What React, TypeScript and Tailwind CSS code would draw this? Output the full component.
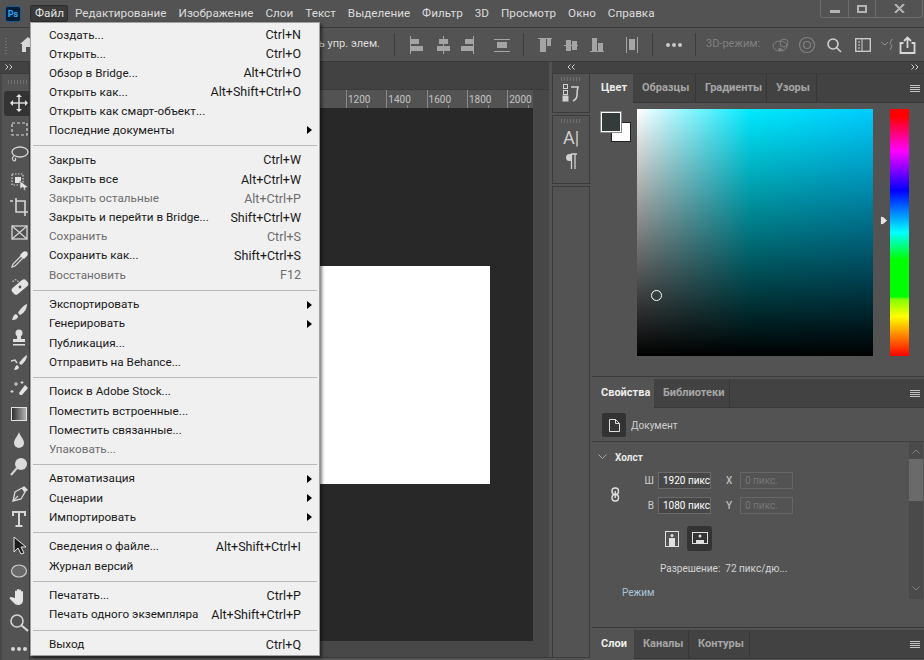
import React from 'react'

type Item = { label: string; keys?: string; off?: boolean; sub?: boolean } | 'sep'

const MENU_ITEMS: Item[] = [
  { label: 'Создать...', keys: 'Ctrl+N' },
  { label: 'Открыть...', keys: 'Ctrl+O' },
  { label: 'Обзор в Bridge...', keys: 'Alt+Ctrl+O' },
  { label: 'Открыть как...', keys: 'Alt+Shift+Ctrl+O' },
  { label: 'Открыть как смарт-объект...' },
  { label: 'Последние документы', sub: true },
  'sep',
  { label: 'Закрыть', keys: 'Ctrl+W' },
  { label: 'Закрыть все', keys: 'Alt+Ctrl+W' },
  { label: 'Закрыть остальные', keys: 'Alt+Ctrl+P', off: true },
  { label: 'Закрыть и перейти в Bridge...', keys: 'Shift+Ctrl+W' },
  { label: 'Сохранить', keys: 'Ctrl+S', off: true },
  { label: 'Сохранить как...', keys: 'Shift+Ctrl+S' },
  { label: 'Восстановить', keys: 'F12', off: true },
  'sep',
  { label: 'Экспортировать', sub: true },
  { label: 'Генерировать', sub: true },
  { label: 'Публикация...' },
  { label: 'Отправить на Behance...' },
  'sep',
  { label: 'Поиск в Adobe Stock...' },
  { label: 'Поместить встроенные...' },
  { label: 'Поместить связанные...' },
  { label: 'Упаковать...', off: true },
  'sep',
  { label: 'Автоматизация', sub: true },
  { label: 'Сценарии', sub: true },
  { label: 'Импортировать', sub: true },
  'sep',
  { label: 'Сведения о файле...', keys: 'Alt+Shift+Ctrl+I' },
  { label: 'Журнал версий' },
  'sep',
  { label: 'Печатать...', keys: 'Ctrl+P' },
  { label: 'Печать одного экземпляра', keys: 'Alt+Shift+Ctrl+P' },
  'sep',
  { label: 'Выход', keys: 'Ctrl+Q' },
]

const TOP_MENU = ['Редактирование', 'Изображение', 'Слои', 'Текст', 'Выделение', 'Фильтр', '3D', 'Просмотр', 'Окно', 'Справка']
const RULER = ['1200', '1400', '1600', '1800', '2000']

function Ico({ children, w = 20, h = 20, className = '' }: { children: React.ReactNode; w?: number; h?: number; className?: string }) {
  return (
    <svg width={w} height={h} viewBox={`0 0 ${w} ${h}`} className={className} fill="none" stroke="#d6d6d6" strokeWidth="1.5">
      {children}
    </svg>
  )
}

const TOOLS: React.ReactNode[] = [
  <Ico key="move"><path d="M10 2v16M2 10h16" strokeWidth="1.6" /><path d="M10 1l3 3H7zM10 19l3-3H7zM1 10l3-3v6zM19 10l-3-3v6z" fill="#e4e4e4" stroke="none" /></Ico>,
  <Ico key="marquee"><rect x="3" y="4" width="15" height="12" strokeDasharray="3 2" strokeWidth="1.2" /></Ico>,
  <Ico key="lasso"><ellipse cx="11" cy="7" rx="8" ry="5" strokeWidth="1.3" /><path d="M5 11c-2 1-2 4 0 5 2 0 2-2 1-3" strokeWidth="1.2" /></Ico>,
  <Ico key="object"><rect x="3" y="3" width="11" height="11" strokeDasharray="1.5 1.5" strokeWidth="1.2" /><rect x="6" y="6" width="6" height="6" fill="#e4e4e4" stroke="none" /><path d="M11 10l8 6-3 1 1 3-2-1-1-3-3 2z" fill="#e4e4e4" stroke="#535353" strokeWidth=".6" /></Ico>,
  <Ico key="crop"><path d="M1 4h3M7 1v3h9v12M7 4v11h9h3M16 16v3" strokeWidth="1.6" /></Ico>,
  <Ico key="frame"><rect x="3" y="3" width="15" height="13" strokeWidth="1.3" /><path d="M3 3l15 13M18 3L3 16" strokeWidth="1.2" /></Ico>,
  <Ico key="dropper"><path d="M12 6l2 2-8 8-3 1 1-3z" strokeWidth="1.3" /><path d="M11 5l3-3c1-1 3-1 4 0s1 3 0 4l-3 3z" fill="#e4e4e4" stroke="none" /></Ico>,
  <Ico key="bandage"><rect x="2" y="7" width="18" height="8" rx="3" fill="#e4e4e4" stroke="none" transform="rotate(-40 11 11)" /><path d="M4 6c0-3 5-3 5 0" strokeDasharray="1.5 1.5" strokeWidth="1.2" /><circle cx="11" cy="11" r="1.4" fill="#535353" stroke="none" /></Ico>,
  <Ico key="brush"><path d="M18 2c-3 1-7 5-9 9l2 2c4-2 7-6 7-11z" fill="#e0e0e0" stroke="none" /><path d="M7 12c-3 1-3 4-4 6 3 0 6-1 6-4z" fill="#e0e0e0" stroke="none" /></Ico>,
  <Ico key="stamp"><circle cx="10" cy="5" r="3.5" fill="#e0e0e0" stroke="none" /><path d="M8 8h4v3h4v3H4v-3h4zM4 16h12v1.5H4z" fill="#e0e0e0" stroke="none" /></Ico>,
  <Ico key="history"><path d="M18 2c-2 1-6 5-8 8l2 2c3-2 6-6 6-10z" fill="#e0e0e0" stroke="none" /><path d="M8 12c-2 1-2 3-3 5 3 0 5-1 5-3z" fill="#e0e0e0" stroke="none" /><path d="M2 8l4-1 2 3" strokeWidth="1.4" /></Ico>,
  <Ico key="eraser"><path d="M10 14l6-8 3 3-6 7h-2z" fill="#e4e4e4" stroke="none" /><path d="M7 3v4M5 5h4M3 11v3M1.5 12.5h3M13 2v3M11.5 3.5h3" strokeWidth="1.1" /></Ico>,
  <svg key="gradient" width="16" height="14" viewBox="0 0 16 14"><defs><linearGradient id="g1"><stop offset="0" stopColor="#2a2a2a" /><stop offset="1" stopColor="#b8b8b8" /></linearGradient></defs><rect x=".5" y=".5" width="15" height="13" fill="url(#g1)" stroke="#e2e2e2" /></svg>,
  <Ico key="drop"><path d="M10 2c-1 4-5 7-5 11a5 5 0 0 0 10 0c0-4-4-7-5-11z" fill="#dcdcdc" stroke="none" /></Ico>,
  <Ico key="dodge"><circle cx="12" cy="7" r="6" fill="#dcdcdc" stroke="none" /><path d="M8 11l-6 7" strokeWidth="2" /></Ico>,
  <Ico key="pen"><path d="M4 18l2-9 7-4 3 4-4 7z" strokeWidth="1.3" /><path d="M4 18l5-5" strokeWidth="1.1" /><path d="M13 5l2-2 4 4-3 2z" fill="#e0e0e0" stroke="none" /></Ico>,
  <Ico key="type"><path d="M4 7V3h12v4M10 3v14M6.5 17h7" strokeWidth="2" /></Ico>,
  <Ico key="arrow"><path d="M5 2v15l4-4 3 6 3-1-3-6h5z" fill="#1d1d1d" stroke="#e4e4e4" strokeWidth="1" /></Ico>,
  <Ico key="ellipse"><ellipse cx="10" cy="10" rx="7.5" ry="6" fill="#6a6a6a" stroke="#d0d0d0" strokeWidth="1.1" /></Ico>,
  <Ico key="hand"><path d="M6 11V4.5a1 1 0 0 1 2 0V3a1 1 0 0 1 2 0v.5a1 1 0 0 1 2 0V5a1 1 0 0 1 2 0v8c0 3-2 5-5 5-2 0-3-1-4-2l-4-4c-1-1 0-2 1-2z" fill="#e4e4e4" stroke="none" /></Ico>,
  <Ico key="zoom"><circle cx="8" cy="8" r="6" strokeWidth="1.6" /><path d="M12.5 12.5L19 18" strokeWidth="2.2" /></Ico>,
  <svg key="more" width="18" height="6" viewBox="0 0 18 6" fill="#d6d6d6"><circle cx="3" cy="3" r="2" /><circle cx="9" cy="3" r="2" /><circle cx="15" cy="3" r="2" /></svg>,
]

const TOOL_H = ['h-[24.5px]', 'h-[26px]', 'h-[26.5px]', 'h-[25.5px]', 'h-[26px]', 'h-[27px]', 'h-[26.5px]', 'h-[26.5px]', 'h-[25.5px]', 'h-[25.5px]', 'h-[25.5px]', 'h-[25px]', 'h-[26px]', 'h-[26.5px]', 'h-[26.5px]', 'h-[26px]', 'h-[26px]', 'h-[25.5px]', 'h-[26px]', 'h-[26.5px]', 'h-[26px]', 'h-[26px]']

function AlignIcon({ kind, className = '' }: { kind: number; className?: string }) {
  const c = '#a4a4a4'
  const shapes = [
    <g key="0"><path d="M1.5 0v18" stroke={c} /><rect x="2" y="3" width="8" height="5" fill={c} /><rect x="2" y="10" width="12" height="5" fill={c} /></g>,
    <g key="1"><path d="M7.5 0v18" stroke={c} /><rect x="3" y="3" width="9" height="5" fill={c} /><rect x="1" y="10" width="13" height="5" fill={c} /></g>,
    <g key="2"><path d="M14.5 0v18" stroke={c} /><rect x="6" y="3" width="8" height="5" fill={c} /><rect x="2" y="10" width="12" height="5" fill={c} /></g>,
    <g key="3"><path d="M0 3.5h16M0 15.5h16" stroke={c} /><rect x="3" y="6" width="10" height="6" fill={c} /></g>,
    <g key="4"><path d="M0 2.5h14" stroke={c} /><rect x="2" y="3" width="6" height="13" fill={c} /><rect x="9" y="3" width="4" height="7" fill={c} /></g>,
    <g key="5"><path d="M0 9.5h14" stroke={c} /><rect x="2" y="4" width="5" height="11" fill={c} /><rect x="8" y="5" width="5" height="9" fill={c} /></g>,
    <g key="6"><path d="M0 15.5h14" stroke={c} /><rect x="2" y="2" width="5" height="13" fill={c} /><rect x="8" y="7" width="5" height="8" fill={c} /></g>,
    <g key="7"><path d="M1.5 1v16M12.5 1v16" stroke={c} /><rect x="4" y="3" width="6" height="11" fill={c} /></g>,
  ]
  return <svg className={className} width="16" height="18" viewBox="0 0 16 18">{shapes[kind]}</svg>
}

const Divider = ({ className = '' }: { className?: string }) => <div className={`w-px h-[23px] bg-[#3c3c3c] ${className}`} />

function Burger() {
  return (
    <div className="flex flex-col gap-[1px] w-[10px]">
      <div className="h-px bg-[#c4c4c4]" />
      <div className="h-px bg-[#c4c4c4]" />
      <div className="h-px bg-[#c4c4c4]" />
      <div className="h-px bg-[#c4c4c4]" />
    </div>
  )
}

function Grip() {
  return <div className="h-[4px] w-[20px] mx-auto bg-[repeating-linear-gradient(90deg,#6f6f6f_0_1px,transparent_1px_3px)]" />
}

function Chevs({ left = false, className = '' }: { left?: boolean; className?: string }) {
  return (
    <svg className={className} width="8" height="6" viewBox="0 0 8 6" fill="none" stroke="#d0d0d0">
      <path d={left ? 'M3.5.5L1 3l2.5 2.5M7.5.5L5 3l2.5 2.5' : 'M.5.5L3 3 .5 5.5M4.5.5L7 3 4.5 5.5'} />
    </svg>
  )
}

function Tabs({ tabs }: { tabs: [string, string][] }) {
  return (
    <div className="flex h-[29px] bg-[#424242] border-b border-[#383838] items-stretch">
      {tabs.map(([t, w], i) => (
        <div
          key={t}
          className={i === 0
            ? `${w} bg-[#535353] -mb-px pl-[9px] flex items-center font-bold text-[11px] text-[#ececec]`
            : `${w} pl-[9px] border-r border-[#383838] flex items-center font-bold text-[11px] text-[#a6a6a6]`}
        >
          {t}
        </div>
      ))}
      <div className="flex-1 flex items-center justify-end pr-[4px]"><Burger /></div>
    </div>
  )
}

export default function App() {
  return (
    <div className="relative w-[924px] h-[660px] overflow-hidden bg-[#535353] text-[12px] font-['Roboto',sans-serif]">
      {/* Строка меню */}
      <div className="flex items-center h-[28px] border-b border-[#3b3b3b] pl-[5px] pr-px">
        <div className="w-[16px] h-[16px] rounded-[3px] bg-[#001e36] border border-[#1c5a8c] text-[#31a8ff] font-bold text-[9px] leading-[14px] text-center">Ps</div>
        <div className="ml-[9px] w-[38px] h-[17px] rounded-[2px] bg-[#3a3a3a] border border-[#2e2e2e]" />
        <div className="flex gap-[12px] ml-[7px] text-[11.7px] text-[#dcdcdc] leading-[16px] pb-[1px]">
          {TOP_MENU.map(m => <span key={m}>{m}</span>)}
        </div>
        <div className="ml-auto self-start flex h-[18px] w-[103px] border border-t-0 border-[#6c6c6c] rounded-b-[3px]">
          <div className="w-[28px] border-r border-[#6c6c6c] flex items-center justify-center"><div className="w-[10px] h-[3px] mt-[6px] bg-[#b4b4b4]" /></div>
          <div className="w-[27px] border-r border-[#6c6c6c] flex items-center justify-center"><div className="w-[10px] h-[8px] border-2 border-[#b4b4b4]" /></div>
          <div className="flex-1 flex items-center justify-center">
            <svg width="11" height="9" viewBox="0 0 11 9" stroke="#b4b4b4" strokeWidth="2"><path d="M1 0l9 9M10 0L1 9" /></svg>
          </div>
        </div>
      </div>

      {/* Панель параметров */}
      <div className="flex items-center h-[34px] border-b border-[#3b3b3b] text-[11px]">
        <div className="w-[394px] flex items-center pl-[5px] pr-[14px] text-[#dcdcdc]">
          <div className="w-[2px] h-[18px] bg-[repeating-linear-gradient(0deg,#707070_0_1px,transparent_1px_3px)]" />
          <svg className="ml-[13px]" width="16" height="15" viewBox="0 0 16 15" fill="#d8d8d8"><path d="M8 0l8 7h-2v8h-4v-5H6v5H2V7H0z" /></svg>
          <span className="ml-auto">ть упр. элем.</span>
        </div>
        <Divider />
        <AlignIcon kind={0} className="ml-[14px]" />
        <AlignIcon kind={1} className="ml-[11px]" />
        <AlignIcon kind={2} className="ml-[7px]" />
        <AlignIcon kind={3} className="ml-[19px]" />
        <Divider className="ml-[13px]" />
        <AlignIcon kind={4} className="ml-[14px]" />
        <AlignIcon kind={5} className="ml-[10px]" />
        <AlignIcon kind={6} className="ml-[10px]" />
        <AlignIcon kind={7} className="ml-[19px]" />
        <Divider className="ml-[11px]" />
        <svg className="ml-[12px]" width="18" height="6" viewBox="0 0 18 6" fill="#c8c8c8"><circle cx="3" cy="3" r="2" /><circle cx="9" cy="3" r="2" /><circle cx="15" cy="3" r="2" /></svg>
        <Divider className="ml-[12px]" />
        <span className="ml-[10px] text-[#808080] w-[52px] whitespace-nowrap">3D-режим:</span>
        <svg className="ml-[14px]" width="20" height="16" viewBox="0 0 20 16" fill="none" stroke="#808080"><ellipse cx="8" cy="9" rx="7" ry="5" /><circle cx="12" cy="6" r="4" /><path d="M7 11l4 2-4 1z" fill="#808080" /></svg>
        <svg className="ml-[6px]" width="18" height="18" viewBox="0 0 18 18" fill="none" stroke="#808080" strokeWidth="1.2"><circle cx="9" cy="9" r="7.5" /><circle cx="9" cy="9" r="3.5" /></svg>
        <svg className="ml-[10px]" width="16" height="16" viewBox="0 0 16 16" fill="none" stroke="#d0d0d0" strokeWidth="1.6"><circle cx="7" cy="7" r="5" /><path d="M10.5 10.5L15 15" /></svg>
        <svg className="ml-[13px]" width="16" height="14" viewBox="0 0 16 14" fill="none" stroke="#d0d0d0" strokeWidth="1.3"><rect x=".7" y=".7" width="14.6" height="12.6" /><path d="M3 4h2M3 7h2M3 10h2M7 1v12" strokeWidth="1" /></svg>
        <svg className="ml-[10px]" width="13" height="14" viewBox="0 0 13 14" fill="none" stroke="#909090"><path d="M0 4l4 3 3-3M11 1L9 5l2 3-2 4" /></svg>
        <svg className="ml-[5px]" width="17" height="18" viewBox="0 0 16 18" fill="none" stroke="#d8d8d8" strokeWidth="1.8"><path d="M4 7H1v10h14V7h-3M8 12V2M4.5 5L8 1.5 11.5 5" /></svg>
      </div>

      <div className="flex h-[598px]">
        {/* Инструменты */}
        <div className="w-[30px] border-r border-[#3b3b3b] border-l-2 border-l-[#474747] shrink-0">
          <div className="h-[12px] bg-[#424242] -ml-[2px] border-b border-[#3b3b3b] pl-[5px] pt-[2px] flex"><Chevs className="self-start" /></div>
          <div className="h-[17px] pt-[6px] pl-[5px]"><Grip /></div>
          {TOOLS.map((t, i) => (
            <div key={i} className={`${TOOL_H[i]} flex items-center justify-center ${i === 0 ? 'bg-[#333333] rounded-l-[3px] ml-[2px] pl-[5px]' : 'pl-[7px]'}`}>
              {t}
            </div>
          ))}
        </div>

        {/* Документ */}
        <div className="w-[522px] shrink-0 flex flex-col">
          <div className="h-[28px] bg-[#424242] border-b border-[#3b3b3b] mr-[3px]" />
          <div className="h-[18px] flex mr-[3px]">
            <div className="relative w-[503px] flex overflow-hidden">
              <div className="w-[316px] shrink-0" />
              {RULER.map(r => (
                <div key={r} className="relative w-[40.3px] shrink-0 border-l border-[#8a8a8a] pl-[1px] text-[10px] leading-[20px] text-[#c4c4c4]">
                  {r}
                  <div className="absolute left-[20px] bottom-0 w-px h-[3px] bg-[#8a8a8a]" />
                </div>
              ))}
            </div>
            <div className="flex-1 bg-[#474747]" />
          </div>
          <div className="h-[533px] flex mr-[3px]">
            <div className="w-[503px] bg-[#282828] pt-[158px] flex justify-end">
              <div className="w-[200px] h-[218px] mr-[43px] bg-white" />
            </div>
            <div className="flex-1 bg-[#474747]" />
          </div>
          <div className="h-[16px] bg-[#484848] mr-[3px]" />
          <div className="h-[3px] border-t border-[#3b3b3b]" />
        </div>

        {/* Средний док */}
        <div className="w-[38px] shrink-0">
          <div className="h-[12px] bg-[#424242] border-b border-[#3b3b3b] flex justify-center pt-[2px]"><Chevs left className="self-start" /></div>
          <div className="h-[39px] border-x border-b border-[#3b3b3b] pt-[3px]">
            <Grip />
            <svg className="mx-auto mt-[2px]" width="18" height="20" viewBox="0 0 18 20" fill="none" stroke="#d0d0d0">
              <rect x="1.5" y="1.5" width="4" height="4" /><rect x="1.5" y="7.5" width="4" height="4" /><rect x="1" y="13" width="5" height="5" fill="#d0d0d0" />
              <path d="M9 4h7c-1 3-1 7-1 8 0 3-2 5-4 6" strokeWidth="1.6" />
            </svg>
          </div>
          <div className="border-x border-y border-[#3b3b3b] h-[69px] pt-[3px] mt-[2px]">
            <Grip />
            <div className="text-[18px] leading-[22px] text-center text-[#d0d0d0] mt-[4px]">A|</div>
            <svg className="mx-auto mt-[4px]" width="12" height="16" viewBox="0 0 12 16" fill="none" stroke="#d0d0d0" strokeWidth="1.3">
              <path d="M6 1H4.500a3.500 3.500 0 0 0 0 7H6z" fill="#d0d0d0" stroke="none" />
              <path d="M6.500 1v15M10 1v15M6 1h6" />
            </svg>
          </div>
          <div className="h-[472px] border border-[#3b3b3b] mt-[2px]" />
        </div>

        {/* Правые панели */}
        <div className="flex-1 flex flex-col min-w-0">
          <div className="h-[12px] bg-[#424242] border-b border-[#3b3b3b] flex justify-end pr-[5px] pt-[2px]"><Chevs className="self-start" /></div>

          <div className="h-[303px] border-b border-[#3b3b3b] ml-[2px]">
            <Tabs tabs={[['Цвет', 'w-[41px]'], ['Образцы', 'w-[63px]'], ['Градиенты', 'w-[71px]'], ['Узоры', 'w-[50px]']]} />
            <div className="flex">
              <div className="relative w-[45px] shrink-0">
                <div className="absolute left-[19px] top-[19px] w-[20px] h-[20px] bg-white border border-[#222]" />
                <div className="absolute left-[9px] top-[9px] w-[20px] h-[20px] bg-[#333b3b] border border-white outline outline-[#888]" />
              </div>
              <div className="relative w-[236px] h-[247px] mt-[6px] bg-[linear-gradient(to_bottom,transparent,#000),linear-gradient(to_right,#fff,#00eaff_48%,#00ccff)]">
                <div className="absolute left-[14px] top-[181px] w-[11px] h-[11px] rounded-full border border-white" />
              </div>
              <div className="relative ml-[17px] w-[19px] h-[247px] mt-[6px] bg-[linear-gradient(to_bottom,#ff0000_3%,#ff00ff_17%,#0000ff_33%,#00ffff_50%,#00ff00_61%,#00ff00_76%,#80ff00_77%,#ffff00_84%,#ff0000)]">
                <svg className="absolute -left-[10px] top-[107px]" width="8" height="9" viewBox="0 0 8 9" fill="#e4e4e4" stroke="#333" strokeWidth=".6"><path d="M.5 1.500a1 1 0 0 1 1-1h1.500L7.500 4.500 3 8.500H1.500a1 1 0 0 1-1-1z" /></svg>
              </div>
            </div>
          </div>

          <div className="h-[249px] border-b border-[#3b3b3b] mt-[2px] ml-[2px]">
            <Tabs tabs={[['Свойства', 'w-[62px]'], ['Библиотеки', 'w-[76px]']]} />
            <div className="h-[34px] flex items-start pt-[5px] pl-[10px] border-b border-[#3f3f3f]">
              <div className="w-[24px] h-[24px] rounded-[2px] bg-[#333333] flex items-center justify-center">
                <svg width="11" height="13" viewBox="0 0 11 13" fill="none" stroke="#e0e0e0"><path d="M.5.5h6l4 4v8H.5zM6.500.5v4h4" /></svg>
              </div>
              <span className="ml-[5px] mt-[6px] text-[10px] leading-[14px] text-[#cfcfcf]">Документ</span>
            </div>
            <div className="relative flex h-[157px]">
              <div className="flex-1 pl-[6px] pt-[8px]">
                <div className="flex items-center h-[14px]">
                  <svg width="9" height="6" viewBox="0 0 9 6" fill="none" stroke="#a8a8a8"><path d="M.5.5l4 4 4-4" /></svg>
                  <span className="ml-[8px] font-bold text-[10px] text-[#e8e8e8]">Холст</span>
                </div>
                <div className="flex mt-[8px]">
                  <svg className="mt-[15px] ml-[13px]" width="9" height="15" viewBox="0 0 9 15" fill="none" stroke="#e0e0e0" strokeWidth="1.4"><rect x="1" y="1" width="6.500" height="6.500" rx="3" /><rect x="1" y="7.500" width="6.500" height="6.500" rx="3" /><path d="M4.200 4v7" /></svg>
                  <div className="ml-[24px] flex flex-col gap-[8px]">
                    {[['Ш', '1920 пикс', 'X'], ['В', '1080 пикс', 'Y']].map(([a, b, c]) => (
                      <div key={a} className="flex items-center text-[10px]">
                        <span className="w-[10px] text-[#d0d0d0] text-right">{a}</span>
                        <div className="ml-[4px] w-[53px] h-[17px] bg-[#474747] border border-[#6a6a6a] pl-[4px] leading-[15px] text-white whitespace-nowrap overflow-hidden">{b}</div>
                        <span className="ml-[15px] w-[12px] font-medium text-[#bdbdbd]">{c}</span>
                        <div className="ml-[2px] w-[53px] h-[17px] border border-[#666666] pl-[4px] leading-[15px] text-[#777777]">0 пикс.</div>
                      </div>
                    ))}
                  </div>
                </div>
                <div className="flex items-center ml-[67px] mt-[12px] gap-[7px]">
                  <svg width="15" height="16" viewBox="0 0 15 16" fill="none"><rect x=".5" y=".5" width="13" height="15" stroke="#e0e0e0" /><circle cx="7" cy="4.500" r="1.500" fill="#e0e0e0" /><rect x="4" y="7" width="6" height="8" fill="#e0e0e0" /></svg>
                  <div className="w-[25px] h-[25px] rounded-[3px] bg-[#333333] flex items-center justify-center">
                    <svg width="16" height="13" viewBox="0 0 16 13" fill="none"><rect x=".5" y=".5" width="15" height="11" stroke="#e0e0e0" /><circle cx="8" cy="4" r="1.500" fill="#e0e0e0" /><path d="M4 11V8h8v3z" fill="#e0e0e0" /></svg>
                  </div>
                </div>
                <div className="ml-[62px] mt-[11px] text-[10px] leading-[14px] text-[#d4d4d4]">Разрешение:&nbsp; 72 пикс/дю...</div>
                <div className="ml-[24px] mt-[10px] text-[10px] leading-[14px] text-[#a9c4d8]">Режим</div>
              </div>
              <div className="w-[14px] bg-[#4a4a4a] mr-px h-[157px] flex flex-col items-center pt-[7px]">
                <svg width="8" height="5" viewBox="0 0 8 5" fill="none" stroke="#808080"><path d="M.5 4.500L4 1l3.500 3.500" /></svg>
                <div className="w-full h-[42px] bg-[#6a6a6a] mt-[5px]" />
                <svg className="mt-auto mb-[8px]" width="8" height="5" viewBox="0 0 8 5" fill="none" stroke="#808080"><path d="M.5.500L4 4l3.500-3.500" /></svg>
              </div>
            </div>
          </div>

          <div className="mt-[2px] ml-[2px]">
            <Tabs tabs={[['Слои', 'w-[42px]'], ['Каналы', 'w-[55px]'], ['Контуры', 'w-[61px]']]} />
          </div>
        </div>
      </div>

      {/* Меню Файл */}
      <div className="absolute left-[30px] top-[22px] w-[290px] h-[634px] bg-[#f0f0f0] border border-[#a0a0a0] pt-[3px] shadow-[2px_2px_3px_rgba(0,0,0,0.5)] text-[11.7px] text-[#1a1a1a]">
        {MENU_ITEMS.map((it, i) =>
          it === 'sep' ? (
            <div key={i} className="h-[10.7px] flex items-center px-[2px]"><div className="h-px w-full bg-[#b8b8b8]" /></div>
          ) : (
            <div key={i} className={`relative h-[19.1px] flex items-center justify-between px-[18px] whitespace-nowrap ${it.off ? 'text-[#6d6d6d]' : ''}`}>
              <span>{it.label}</span>
              {it.keys && <span className="text-[12.5px]">{it.keys}</span>}
              {it.sub && <div className="absolute right-[7px] top-[5px] w-0 h-0 border-y-[4px] border-y-transparent border-l-[5px] border-l-black" />}
            </div>
          )
        )}
      </div>
      <div className="absolute left-[35px] top-[5px] text-[11.7px] leading-[16px] text-[#e4e4e4]">Файл</div>
    </div>
  )
}
